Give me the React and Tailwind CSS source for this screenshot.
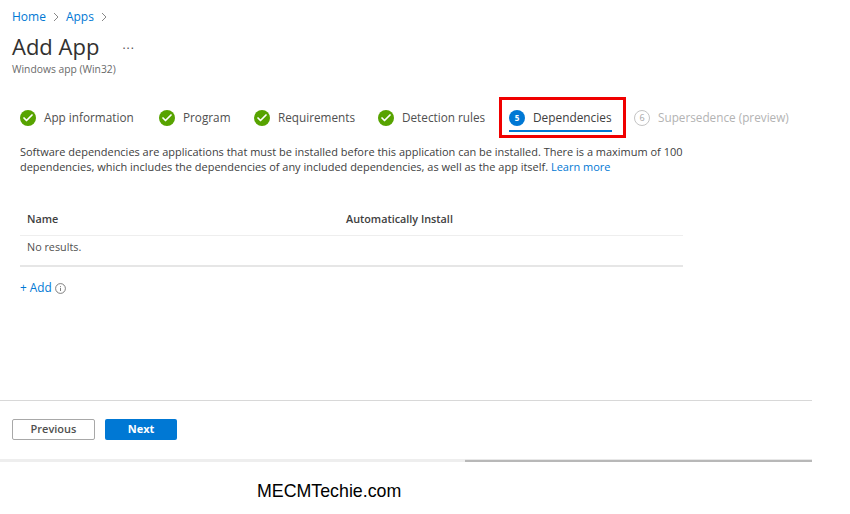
import { Check } from 'lucide-react'

const steps = [
  { label: 'App information', width: 'w-[139px]' },
  { label: 'Program', width: 'w-[95px]' },
  { label: 'Requirements', width: 'w-[124px]' },
  { label: 'Detection rules', width: 'w-[121px]' },
]

const DoneStep = ({ label, width }) => (
  <div className={`flex items-center gap-[8px] ${width}`}>
    <span className="flex h-[16px] w-[16px] items-center justify-center rounded-full bg-[#57a300]">
      <Check size={12} strokeWidth={3.5} className="text-white" />
    </span>
    <span className="text-[11.75px] text-[#505050]">{label}</span>
  </div>
)

const App = () => {
  return (
    <div className="relative h-[514px] w-[850px] overflow-hidden bg-white font-['Open_Sans','Noto_Sans',sans-serif]">
      {/* Breadcrumb + title */}
      <div className="pl-[12px] pt-[9px]">
        <div className="flex h-[16px] items-center text-[12px] text-[#0078d4]">
          <span>Home</span>
          <svg width="6" height="10" viewBox="0 0 6 10" className="mx-[7px]" fill="none" stroke="#7a7a7a" strokeWidth="0.9"><path d="M1 1l4 4-4 4" /></svg>
          <span>Apps</span>
          <svg width="6" height="10" viewBox="0 0 6 10" className="ml-[7px]" fill="none" stroke="#7a7a7a" strokeWidth="0.9"><path d="M1 1l4 4-4 4" /></svg>
        </div>
        <div className="mt-[5px] flex h-[32px] items-center">
          <h1 className="text-[22px] font-normal leading-[32px] text-[#323130]">Add App</h1>
          <span className="mb-[2px] ml-[23px] text-[12px] leading-none tracking-[1px] text-[#505050]">...</span>
        </div>
        <p className="mt-[1px] text-[10.3px] leading-[12px] text-[#6a6a6a]">Windows app (Win32)</p>
      </div>

      {/* Steps */}
      <div className="mt-[22px] flex h-[41px] items-center pl-[20px]">
        {steps.map((s) => (
          <DoneStep key={s.label} label={s.label} width={s.width} />
        ))}
        <div className="flex h-[41px] w-[127px] items-start border-[3px] border-[#f00000] pl-[7px]">
          <div className="mt-[5px] flex h-[27px] w-[103px] items-center gap-[8px] border-b-2 border-[#0078d4]">
            <span className="flex h-[16px] w-[16px] items-center justify-center rounded-full bg-[#0078d4] text-[8px] font-bold text-white">5</span>
            <span className="text-[11.85px] font-medium text-[#404040]">Dependencies</span>
          </div>
        </div>
        <div className="ml-[8px] flex items-center gap-[8px]">
          <span className="flex h-[16px] w-[16px] items-center justify-center rounded-full border border-[#c4c4c4] text-[9px] text-[#a6a6a6]">6</span>
          <span className="text-[11.75px] text-[#b3b3b3]">Supersedence (preview)</span>
        </div>
      </div>

      {/* Description */}
      <p className="mt-[6px] w-[690px] pl-[20px] text-[10.97px] leading-[15px] text-[#404040]">
        Software dependencies are applications that must be installed before this application can be installed. There is a maximum of 100 dependencies, which includes the dependencies of any included dependencies, as well as the app itself. <span className="text-[#0078d4]">Learn more</span>
      </p>

      {/* Table */}
      <div className="ml-[20px] mt-[31px] w-[663px]">
        <div className="flex h-[31px] items-center border-b border-[#eeeeee] pb-[2px] pl-[7px] text-[10.8px] font-semibold text-[#404040]">
          <span className="w-[319px]">Name</span>
          <span>Automatically Install</span>
        </div>
        <div className="flex h-[31px] items-center border-b-2 border-[#e6e6e6] pb-[6px] pl-[7px] text-[10.8px] text-[#505050]">No results.</div>
      </div>

      <div className="ml-[20px] mt-[13px] flex h-[16px] items-center gap-[3px] text-[11.8px] text-[#0078d4]">
        <span>+ Add</span>
        <svg width="11" height="11" viewBox="0 0 11 11" fill="none" stroke="#606060" strokeWidth="0.8">
          <circle cx="5.5" cy="5.5" r="4.9" />
          <path d="M5.5 4.8v3.2M5.5 3v.9" />
        </svg>
      </div>

      {/* Footer */}
      <div className="mt-[104px] h-[59px] w-[812px] border-t border-[#d8d8d8] pl-[12px] pt-[18px]">
        <div className="flex gap-[10px]">
          <button className="h-[21px] w-[83px] rounded-[2px] border border-[#a8a8a8] bg-white text-[11px] font-semibold text-[#505050]">Previous</button>
          <button className="h-[21px] w-[72px] rounded-[2px] bg-[#0078d4] text-[11px] font-bold text-white">Next</button>
        </div>
      </div>
      <div className="flex h-[3px] w-[812px]">
        <div className="w-[465px] bg-[#eeeeee]" />
        <div className="flex-1 border-t border-[#e8e8e8] bg-[#b8b8b8]" />
      </div>

      <p className="mt-[19px] pl-[257px] font-['Liberation_Sans',sans-serif] text-[17.8px] leading-[21px] text-black">MECMTechie.com</p>
    </div>
  )
}

export default App
